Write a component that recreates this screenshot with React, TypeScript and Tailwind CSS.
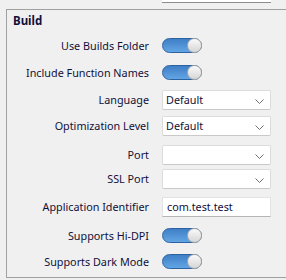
import React from "react";

const Toggle = () => (
  <div className="relative w-[40px] h-[15px] rounded-full border border-[#2d62a0] bg-gradient-to-b from-[#3f7fc6] to-[#62a5e4]">
    <div className="absolute right-[-1px] top-[-1px] w-[15px] h-[15px] rounded-full border border-[#a9a9a9] bg-gradient-to-b from-[#fafafa] to-[#d6d6d6]" />
  </div>
);

const Select = ({ value }: { value?: string }) => (
  <div className="relative flex items-center w-[109px] h-[20px] bg-white border border-[#dcdcdc] border-b-[#c9c9c9] rounded-[2px] pl-[3px] text-[#10103a]">
    <span>{value}</span>
    <svg className="absolute right-[6px] top-[8px]" width="9" height="5" viewBox="0 0 9 5">
      <polyline points="0.5,0.5 4.5,4.5 8.5,0.5" fill="none" stroke="#707070" strokeWidth="1" />
    </svg>
  </div>
);

const Row = ({ label, mt, h, children }: { label: string; mt: string; h: string; children: React.ReactNode }) => (
  <div className={`flex items-center ${h} ${mt}`}>
    <div className="w-[142px] text-right text-[#10103a] leading-[14px] whitespace-nowrap">{label}</div>
    <div className="ml-[13px]">{children}</div>
  </div>
);

export default function App() {
  return (
    <div
      className="w-[286px] h-[280px] bg-[#f0f0f0] overflow-hidden text-[10.8px]"
      style={{ fontFamily: '"Noto Sans", "Segoe UI", sans-serif' }}
    >
      <div className="h-[9px]">
        <div className="ml-[162px] w-[109px] h-[3px] bg-white border-b border-[#8c8c8c]" />
      </div>
      <div className="ml-[6px] h-[269px] border-l border-t border-b border-[#a0a0a0] flex flex-col">
        <div className="mt-[3px] ml-[6px] h-[16px] leading-[16px] text-[11.5px] font-bold text-[#10103a]">Build</div>
        <Row label="Use Builds Folder" mt="mt-[9px]" h="h-[15px]">
          <Toggle />
        </Row>
        <Row label="Include Function Names" mt="mt-[12px]" h="h-[15px]">
          <Toggle />
        </Row>
        <Row label="Language" mt="mt-[10px]" h="h-[20px]">
          <Select value="Default" />
        </Row>
        <Row label="Optimization Level" mt="mt-[6px]" h="h-[20px]">
          <Select value="Default" />
        </Row>
        <Row label="Port" mt="mt-[9px]" h="h-[20px]">
          <Select />
        </Row>
        <Row label="SSL Port" mt="mt-[4px]" h="h-[20px]">
          <Select />
        </Row>
        <Row label="Application Identifier" mt="mt-[8px]" h="h-[20px]">
          <div className="flex items-center w-[109px] h-[20px] bg-white border border-[#e3e3e3] border-b-[#b5b5b5] pl-[4px] text-[#10103a]">
            com.test.test
          </div>
        </Row>
        <Row label="Supports Hi-DPI" mt="mt-[11px]" h="h-[15px]">
          <Toggle />
        </Row>
        <Row label="Supports Dark Mode" mt="mt-[11px]" h="h-[15px]">
          <Toggle />
        </Row>
      </div>
    </div>
  );
}
